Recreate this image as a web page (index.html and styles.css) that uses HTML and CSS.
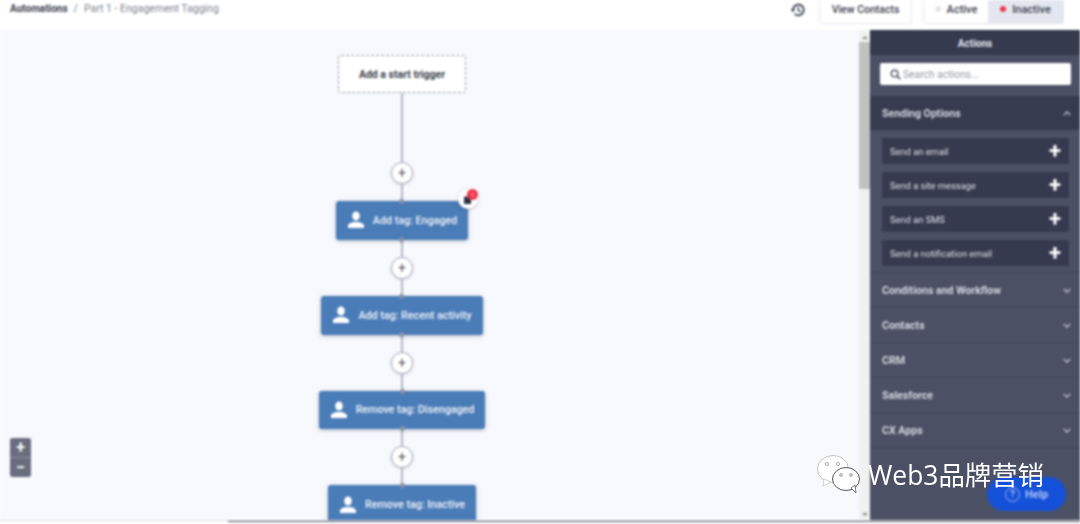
FILE: index.html
```html
<!DOCTYPE html>
<html lang="en">
<head>
    <meta charset="UTF-8">
    <meta name="viewport" content="width=device-width, initial-scale=1.0">
    <title>Part 1 - Engagement Tagging</title>
    <link rel="stylesheet" href="styles.css">
</head>
<body>
    <div class="app">
        <header class="topbar">
            <div class="crumbs">
                <strong>Automations</strong>
                <span class="crumb-sep">/</span>
                <span class="crumb-page">Part 1 - Engagement Tagging</span>
            </div>
            <svg class="history-icon" viewBox="0 0 16 16" width="16" height="16">
                <path d="M3 8a5.4 5.4 0 1 1 1.7 3.9" fill="none" stroke="#3b3f4f" stroke-width="1.8"/>
                <path d="M0.6 7.2h4.6L3 10.2z" fill="#3b3f4f"/>
                <path d="M8.4 4.8v3.6l2.4 1.4" fill="none" stroke="#3b3f4f" stroke-width="1.4"/>
            </svg>
            <button class="view-btn">View Contacts</button>
            <div class="status-toggle">
                <span class="status-opt"><i class="dot dot-off"></i>Active</span>
                <span class="status-opt status-on"><i class="dot dot-on"></i>Inactive</span>
            </div>
        </header>

        <div class="workspace">
            <main class="canvas">
                <div class="flow">
                    <div class="trigger">Add a start trigger</div>
                    <div class="line line-long"></div>
                    <div class="add-btn">+</div>
                    <div class="line"></div>
                    <div class="node">
                        <svg class="person" viewBox="0 0 18 18" width="18" height="18"><ellipse cx="9" cy="5" rx="3.8" ry="4.6"/><path d="M1 17v-2.6c0-1.6 3.4-2.6 5-3.4h6c1.6 .8 5 1.8 5 3.4V17z"/></svg>
                        Add tag: Engaged
                        <span class="note-badge">
                            <svg viewBox="0 0 8 9" width="8" height="9"><path d="M0 1.5h7V9H0z" fill="#2d3040"/></svg>
                            <i class="note-count">1</i>
                        </span>
                    </div>
                    <div class="line"></div>
                    <div class="add-btn">+</div>
                    <div class="line"></div>
                    <div class="node">
                        <svg class="person" viewBox="0 0 18 18" width="18" height="18"><ellipse cx="9" cy="5" rx="3.8" ry="4.6"/><path d="M1 17v-2.6c0-1.6 3.4-2.6 5-3.4h6c1.6 .8 5 1.8 5 3.4V17z"/></svg>
                        Add tag: Recent activity
                    </div>
                    <div class="line"></div>
                    <div class="add-btn">+</div>
                    <div class="line"></div>
                    <div class="node">
                        <svg class="person" viewBox="0 0 18 18" width="18" height="18"><ellipse cx="9" cy="5" rx="3.8" ry="4.6"/><path d="M1 17v-2.6c0-1.6 3.4-2.6 5-3.4h6c1.6 .8 5 1.8 5 3.4V17z"/></svg>
                        Remove tag: Disengaged
                    </div>
                    <div class="line"></div>
                    <div class="add-btn">+</div>
                    <div class="line"></div>
                    <div class="node">
                        <svg class="person" viewBox="0 0 18 18" width="18" height="18"><ellipse cx="9" cy="5" rx="3.8" ry="4.6"/><path d="M1 17v-2.6c0-1.6 3.4-2.6 5-3.4h6c1.6 .8 5 1.8 5 3.4V17z"/></svg>
                        Remove tag: Inactive
                    </div>
                </div>
                <div class="zoom-ctrl">
                    <span class="zoom-btn">+</span>
                    <span class="zoom-btn">−</span>
                </div>
            </main>

            <div class="scrollbar">
                <span class="arrow arrow-up"></span>
                <div class="thumb"></div>
                <span class="arrow arrow-down"></span>
            </div>

            <aside class="sidebar">
                <div class="side-title">Actions</div>
                <div class="search-wrap">
                    <div class="search">
                        <svg viewBox="0 0 12 12" width="11" height="11"><circle cx="5" cy="5" r="3.6" fill="none" stroke="#555a6c" stroke-width="1.6"/><path d="M7.6 7.6l3.4 3.4" stroke="#555a6c" stroke-width="2"/></svg>
                        Search actions...
                    </div>
                </div>
                <div class="section section-open">
                    Sending Options
                    <svg class="chev" viewBox="0 0 10 6" width="8" height="5"><path d="M1 5l4-4 4 4" fill="none" stroke="#cfd2dc" stroke-width="1.6"/></svg>
                </div>
                <div class="items">
                    <div class="item">Send an email<span class="plus">+</span></div>
                    <div class="item">Send a site message<span class="plus">+</span></div>
                    <div class="item">Send an SMS<span class="plus">+</span></div>
                    <div class="item">Send a notification email<span class="plus">+</span></div>
                </div>
                <div class="section">
                    Conditions and Workflow
                    <svg class="chev" viewBox="0 0 10 6" width="8" height="5"><path d="M1 1l4 4 4-4" fill="none" stroke="#cfd2dc" stroke-width="1.6"/></svg>
                </div>
                <div class="section">
                    Contacts
                    <svg class="chev" viewBox="0 0 10 6" width="8" height="5"><path d="M1 1l4 4 4-4" fill="none" stroke="#cfd2dc" stroke-width="1.6"/></svg>
                </div>
                <div class="section">
                    CRM
                    <svg class="chev" viewBox="0 0 10 6" width="8" height="5"><path d="M1 1l4 4 4-4" fill="none" stroke="#cfd2dc" stroke-width="1.6"/></svg>
                </div>
                <div class="section">
                    Salesforce
                    <svg class="chev" viewBox="0 0 10 6" width="8" height="5"><path d="M1 1l4 4 4-4" fill="none" stroke="#cfd2dc" stroke-width="1.6"/></svg>
                </div>
                <div class="section">
                    CX Apps
                    <svg class="chev" viewBox="0 0 10 6" width="8" height="5"><path d="M1 1l4 4 4-4" fill="none" stroke="#cfd2dc" stroke-width="1.6"/></svg>
                </div>
                <div class="help-btn">
                    <span class="help-mark">?</span>
                    Help
                </div>
            </aside>
        </div>

        <div class="bottom-edge"><div class="bottom-line"></div></div>
    </div>

    <div class="watermark">
        <svg viewBox="0 0 44 39" width="44" height="39">
            <ellipse cx="16" cy="14" rx="15.5" ry="13.5" fill="#fff" stroke="#aaa" stroke-width="0.7"/>
            <path d="M7 24l-1 7 8-4z" fill="#fff" stroke="#aaa" stroke-width="0.5"/>
            <circle cx="10" cy="9" r="1.6" fill="#fff" stroke="#777" stroke-width="0.6"/>
            <circle cx="21" cy="9" r="1.6" fill="#fff" stroke="#777" stroke-width="0.6"/>
            <ellipse cx="29" cy="24" rx="13.5" ry="11.5" fill="#fff" stroke="#444" stroke-width="0.9"/>
            <path d="M34 33l5 5-1-8z" fill="#fff" stroke="#444" stroke-width="0.7"/>
            <circle cx="24" cy="20" r="1.3" fill="#fff" stroke="#555" stroke-width="0.6"/>
            <circle cx="34" cy="20" r="1.3" fill="#fff" stroke="#555" stroke-width="0.6"/>
        </svg>
        <span class="watermark-text">Web3品牌营销</span>
    </div>
</body>
</html>
```

FILE: styles.css
```css
html, body {
    margin: 0;
    padding: 0;
    height: 524px;
    overflow: hidden;
    background: #fff;
}
body {
    font-family: 'Roboto', 'Noto Sans CJK SC', sans-serif;
    position: relative;
}
.app {
    height: 524px;
    display: flex;
    flex-direction: column;
    filter: blur(0.8px);
}

/* top bar */
.topbar {
    height: 30px;
    flex: none;
    display: flex;
    align-items: flex-start;
    background: #fff;
    padding-right: 16px;
    box-sizing: border-box;
}
.crumbs {
    margin: 2px auto 0 10px;
    font-size: 10.5px;
    line-height: 14px;
    color: #80848f;
    display: flex;
    gap: 6px;
}
.crumbs strong {
    color: #3f4250;
    font-size: 10px;
    font-weight: 700;
}
.history-icon {
    margin: 2px 13px 0 0;
}
.view-btn {
    width: 93px;
    height: 24px;
    margin-right: 11px;
    padding: 0 0 5px;
    font: 500 10.5px 'Roboto', sans-serif;
    color: #3f4250;
    background: #fff;
    border: 1px solid #e6e8ee;
    border-top: none;
    border-radius: 0 0 3px 3px;
}
.status-toggle {
    display: flex;
    height: 24px;
    border: 1px solid #e6e8ee;
    border-top: none;
    border-radius: 0 0 3px 3px;
    overflow: hidden;
    box-sizing: border-box;
}
.status-opt {
    width: 64px;
    padding-bottom: 5px;
    box-sizing: border-box;
    display: flex;
    align-items: center;
    justify-content: center;
    gap: 6px;
    font-size: 11px;
    font-weight: 500;
    color: #3f4250;
}
.status-on {
    width: 75px;
    background: #e4e7ef;
}
.dot {
    width: 6px;
    height: 6px;
    border-radius: 50%;
}
.dot-off {
    background: #e2e5f0;
}
.dot-on {
    background: #f0364f;
}

/* main area */
.workspace {
    flex: 1;
    min-height: 0;
    display: flex;
}
.canvas {
    flex: 1;
    position: relative;
    overflow: hidden;
    background: #f7f9fe;
}
.flow {
    display: flex;
    flex-direction: column;
    align-items: center;
    padding: 25px 55px 0 0;
}
.trigger {
    width: 128px;
    height: 38px;
    box-sizing: border-box;
    flex: none;
    display: flex;
    align-items: center;
    justify-content: center;
    background: #fff;
    border: 1px dashed #9a9dac;
    border-radius: 3px;
    font-size: 10.5px;
    font-weight: 700;
    color: #3c3f4d;
}
.line {
    width: 2px;
    height: 17px;
    flex: none;
    background: #b4b7c6;
}
.line-long {
    height: 69px;
}
.add-btn {
    width: 20px;
    height: 20px;
    flex: none;
    display: flex;
    align-items: center;
    justify-content: center;
    background: #fff;
    border: 1px solid #a9acba;
    border-radius: 50%;
    box-shadow: 0 1px 3px rgba(0, 0, 0, 0.15);
    font-size: 14px;
    line-height: 1;
    color: #555866;
}
.node {
    height: 38.8px;
    box-sizing: border-box;
    flex: none;
    position: relative;
    display: flex;
    align-items: center;
    gap: 8px;
    padding: 0 11px;
    background: #4a7cb8;
    border-radius: 3px;
    box-shadow: 0 1px 4px rgba(50, 60, 90, 0.35);
    font-size: 10.7px;
    font-weight: 500;
    color: #eef2f8;
    white-space: nowrap;
}
.node::before,
.node::after {
    content: "";
    position: absolute;
    left: 50%;
    width: 5px;
    height: 5px;
    margin-left: -2.5px;
    background: #8b8fa3;
    border-radius: 50%;
}
.node::before {
    top: -2px;
}
.node::after {
    bottom: -2px;
}
.person {
    fill: #fff;
    flex: none;
}
.note-badge {
    position: absolute;
    top: -12px;
    right: -10px;
    width: 20px;
    height: 20px;
    display: flex;
    align-items: center;
    justify-content: center;
    background: #fff;
    border-radius: 50%;
    box-shadow: 0 1px 3px rgba(0, 0, 0, 0.25);
}
.note-count {
    position: absolute;
    top: 0;
    right: 0;
    width: 11px;
    height: 11px;
    background: #f0364f;
    border-radius: 50%;
    font-size: 6px;
    font-style: normal;
    line-height: 11px;
    text-align: center;
    color: #ffc9d0;
}
.zoom-ctrl {
    position: absolute;
    left: 10px;
    top: 408px;
    width: 21px;
    display: flex;
    flex-direction: column;
    gap: 1px;
    border-radius: 3px;
    overflow: hidden;
    background: #8f92a0;
}
.zoom-btn {
    height: 19px;
    display: flex;
    align-items: center;
    justify-content: center;
    background: #696d7e;
    color: #fff;
    font-size: 16px;
    font-weight: 700;
    line-height: 1;
}

/* scrollbar */
.scrollbar {
    width: 11px;
    flex: none;
    display: flex;
    flex-direction: column;
    background: #f1f1f1;
}
.thumb {
    height: 147px;
    background: #c1c1c1;
}
.arrow {
    width: 0;
    height: 0;
    margin: 6px auto 3px;
    border: 3px solid transparent;
    border-top: none;
    border-bottom: 3px solid #8a8a8a;
}
.arrow-down {
    margin: auto auto 4px;
    border: 3px solid transparent;
    border-bottom: none;
    border-top: 3px solid #8a8a8a;
}

/* actions panel */
.sidebar {
    width: 210px;
    flex: none;
    position: relative;
    background: #4b5065;
    border-top: 1px solid #2c3040;
    box-sizing: border-box;
    color: #d7d9e2;
}
.side-title {
    height: 24px;
    display: flex;
    align-items: center;
    justify-content: center;
    background: #353a4e;
    font-size: 10px;
    font-weight: 700;
    color: #e4e6ee;
}
.search-wrap {
    padding: 8px 9px 11px 10px;
}
.search {
    height: 22px;
    display: flex;
    align-items: center;
    gap: 2px;
    padding-left: 10px;
    background: #fff;
    border-radius: 2px;
    font-size: 10.3px;
    color: #9396a3;
}
.section {
    height: 35px;
    box-sizing: border-box;
    display: flex;
    align-items: center;
    justify-content: space-between;
    padding: 0 9px 0 12px;
    border-bottom: 1px solid #40455a;
    font-size: 10.6px;
    font-weight: 700;
    color: #d4d6e0;
}
.section-open {
    height: 34px;
    background: #363b4f;
    border-bottom: none;
}
.items {
    display: flex;
    flex-direction: column;
    gap: 8px;
    padding: 8px 11px 6px 12px;
    border-bottom: 1px solid #40455a;
}
.item {
    height: 26px;
    display: flex;
    align-items: center;
    justify-content: space-between;
    padding: 0 8px 0 8px;
    background: #363a4e;
    border-radius: 2px;
    font-size: 9.3px;
    color: #dfe1e9;
}
.plus {
    font-size: 22px;
    font-weight: 700;
    line-height: 1;
    color: #fff;
}
.help-btn {
    position: absolute;
    left: 117px;
    bottom: 9px;
    width: 79px;
    height: 34px;
    display: flex;
    align-items: center;
    justify-content: center;
    gap: 5px;
    background: #1550d8;
    border-radius: 17px;
    font-size: 11px;
    font-weight: 700;
    color: #a9c0f5;
}
.help-mark {
    width: 13px;
    height: 13px;
    border: 1px solid #9db6f2;
    border-radius: 50%;
    font-size: 9px;
    line-height: 13px;
    text-align: center;
}

/* bottom edge */
.bottom-edge {
    height: 4px;
    flex: none;
    background: #fff;
    border-top: 1px solid #dcdde2;
    box-sizing: border-box;
}
.bottom-line {
    height: 1px;
    margin-left: 228px;
    background: #555866;
}

/* watermark */
.watermark {
    position: absolute;
    left: 817px;
    top: 455px;
    display: flex;
    align-items: center;
    gap: 7px;
}
.watermark-text {
    font-family: 'Open Sans', 'Noto Sans CJK SC', sans-serif;
    font-size: 26.4px;
    line-height: 28px;
    color: #fff;
}
```
